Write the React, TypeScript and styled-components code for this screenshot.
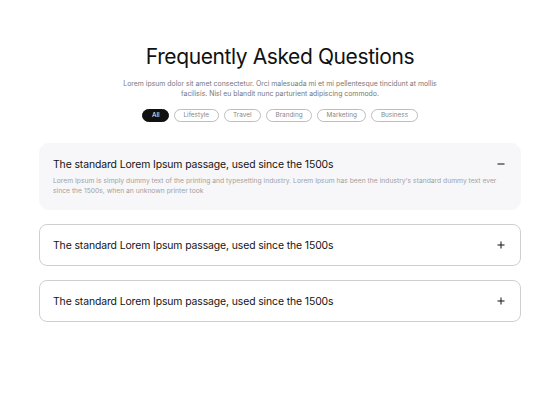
import React, { useState } from "react";
import styled, { createGlobalStyle } from "styled-components";

const Global = createGlobalStyle`
  html, body { margin: 0; padding: 0; background: #ffffff; }
  body { font-family: Inter, "Noto Sans", sans-serif; color: #111; }
`;

const Page = styled.div`
  width: 560px;
  height: 400px;
  box-sizing: border-box;
  padding: 43px 39px 0 39px;
  display: flex;
  flex-direction: column;
  align-items: center;
`;

const Title = styled.h1`
  margin: 0;
  font-size: 21px;
  font-weight: 400;
  letter-spacing: -0.4px;
  line-height: 28px;
  color: #111;
`;

const Subtitle = styled.p`
  margin: 8px 0 0 0;
  width: 322px;
  text-align: center;
  font-size: 6.9px;
  line-height: 10px;
  color: #777;
`;

const Tabs = styled.div`
  margin-top: 10px;
  display: flex;
  gap: 5px;
`;

const Tab = styled.button<{ $active?: boolean }>`
  height: 13px;
  box-sizing: border-box;
  padding: 0 8.5px;
  border-radius: 7px;
  border: 1px solid ${(p) => (p.$active ? "#111" : "#bdbdbd")};
  background: ${(p) => (p.$active ? "#111" : "#fff")};
  color: ${(p) => (p.$active ? "#fff" : "#888")};
  font-family: Inter, sans-serif;
  font-size: 6.4px;
  line-height: 11px;
  cursor: pointer;
`;

const List = styled.div`
  margin-top: 21px;
  width: 100%;
  display: flex;
  flex-direction: column;
  gap: 14px;
`;

const Card = styled.div<{ $open?: boolean }>`
  box-sizing: border-box;
  width: 100%;
  border-radius: ${(p) => (p.$open ? "10px" : "8px")};
  background: ${(p) => (p.$open ? "#f7f7f9" : "#fff")};
  border: 1px solid ${(p) => (p.$open ? "#f7f7f9" : "#cfcfcf")};
  padding: ${(p) => (p.$open ? "13px 13px 13px 13px" : "13px 13px 13px 13px")};
`;

const Head = styled.div`
  display: flex;
  align-items: center;
  justify-content: space-between;
  height: 14px;
`;

const Question = styled.span`
  font-size: 10.4px;
  color: #141414;
  letter-spacing: -0.1px;
`;

const Toggle = styled.span`
  width: 12px;
  display: flex;
  justify-content: center;
`;

const Answer = styled.p`
  margin: 5px 0 0 0;
  font-size: 6.75px;
  line-height: 10px;
  color: #a2a2a2;
  padding-right: 10px;
`;

const Icon = ({ open }: { open: boolean }) => (
  <svg width="8" height="8" viewBox="0 0 8 8">
    <line x1="0.5" y1="4" x2="7.5" y2="4" stroke="#222" strokeWidth="1.1" />
    {!open && <line x1="4" y1="0.5" x2="4" y2="7.5" stroke="#222" strokeWidth="1.1" />}
  </svg>
);

const tabs = ["All", "Lifestyle", "Travel", "Branding", "Marketing", "Business"];

export default function App() {
  const [active, setActive] = useState(0);
  const [open, setOpen] = useState(0);
  return (
    <>
      <Global />
      <Page>
        <Title>Frequently Asked Questions</Title>
        <Subtitle>
          Lorem ipsum dolor sit amet consectetur. Orci malesuada mi et mi pellentesque tincidunt at mollis
          facilisis. Nisl eu blandit nunc parturient adipiscing commodo.
        </Subtitle>
        <Tabs>
          {tabs.map((t, i) => (
            <Tab key={t} $active={i === active} onClick={() => setActive(i)}>
              {t}
            </Tab>
          ))}
        </Tabs>
        <List>
          {[0, 1, 2].map((i) => (
            <Card key={i} $open={open === i} onClick={() => setOpen(open === i ? -1 : i)}>
              <Head>
                <Question>The standard Lorem Ipsum passage, used since the 1500s</Question>
                <Toggle>
                  <Icon open={open === i} />
                </Toggle>
              </Head>
              {open === i && (
                <Answer>
                  Lorem Ipsum is simply dummy text of the printing and typesetting industry. Lorem Ipsum has been the
                  industry's standard dummy text ever since the 1500s, when an unknown printer took
                </Answer>
              )}
            </Card>
          ))}
        </List>
      </Page>
    </>
  );
}
